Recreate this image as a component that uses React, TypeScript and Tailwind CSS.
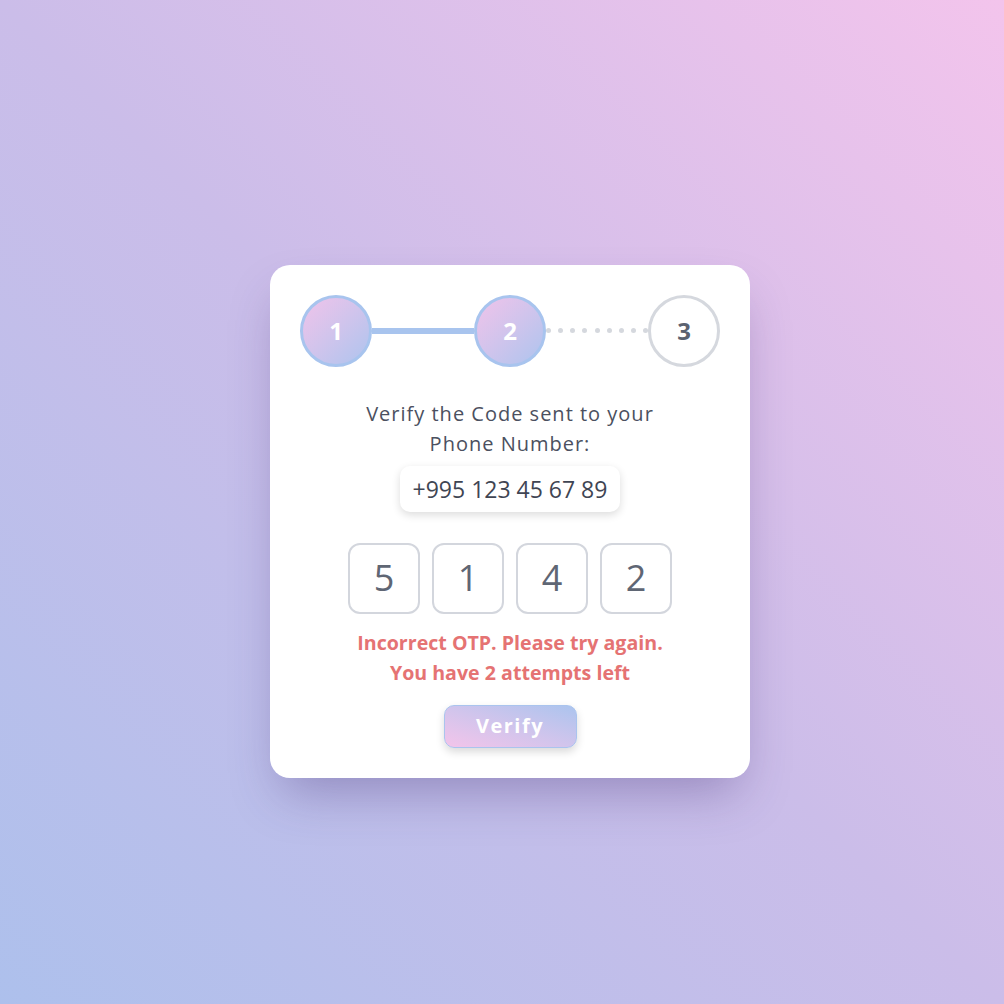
import React from "react";

const font = { fontFamily: '"Open Sans", "Noto Sans", sans-serif' };

function Step({ n, active }: { n: number; active: boolean }) {
  return active ? (
    <div className="flex h-[72px] w-[72px] shrink-0 items-center justify-center rounded-full border-[3px] border-[#a8c4ee] bg-gradient-to-br from-[#f0c3ea] to-[#adc4ee] text-[24px] font-bold text-white">
      {n}
    </div>
  ) : (
    <div className="flex h-[72px] w-[72px] shrink-0 items-center justify-center rounded-full border-[3px] border-[#d5d8de] bg-white text-[24px] font-bold text-[#5b6270]">
      {n}
    </div>
  );
}

export default function App() {
  const digits = ["5", "1", "4", "2"];
  return (
    <div
      className="flex h-[1004px] w-[1004px] items-center justify-center bg-gradient-to-tr from-[#adc0ec] via-[#cbbde9] to-[#f3c4ec] pl-[16px] pt-[38px]"
      style={font}
    >
      <div className="flex w-[480px] flex-col items-center rounded-[20px] bg-white px-[30px] pb-[30px] pt-[30px] shadow-[0_25px_50px_-12px_rgba(60,40,110,0.35)]">
        <div className="flex w-full items-center">
          <Step n={1} active />
          <div className="h-[6px] flex-1 bg-[#a8c4ee]" />
          <Step n={2} active />
          <div className="flex flex-1 items-center justify-between">
            {Array.from({ length: 9 }).map((_, i) => (
              <div key={i} className="h-[5px] w-[5px] rounded-full bg-[#d5d8de]" />
            ))}
          </div>
          <Step n={3} active={false} />
        </div>

        <p className="mt-[32px] text-center text-[20px] leading-[30px] tracking-[1px] text-[#4b5060]">
          Verify the Code sent to your
          <br />
          Phone Number:
        </p>

        <div className="mt-[7px] rounded-[10px] bg-white px-[13px] py-[6px] text-[23px] leading-[34px] text-[#3f4553] shadow-[0_3px_8px_rgba(0,0,0,0.14)]">
          +995 123 45 67 89
        </div>

        <div className="mt-[31px] flex gap-[12px]">
          {digits.map((d, i) => (
            <div
              key={i}
              className="flex h-[71px] w-[72px] items-center justify-center rounded-[12px] border-[2px] border-[#d3d6dd] text-[36px] text-[#5f6674]"
            >
              {d}
            </div>
          ))}
        </div>

        <p className="mt-[14px] text-center text-[19.6px] font-bold leading-[30px] text-[#e57373]">
          Incorrect OTP. Please try again.
          <br />
          You have 2 attempts left
        </p>

        <button className="mt-[17px] h-[43px] w-[133px] rounded-[10px] border border-[#aac4ee] bg-gradient-to-tr from-[#f3c4ea] to-[#abc4ee] text-[20px] font-bold tracking-[1.5px] text-white shadow-[0_4px_8px_rgba(0,0,0,0.15)]">
          Verify
        </button>
      </div>
    </div>
  );
}
